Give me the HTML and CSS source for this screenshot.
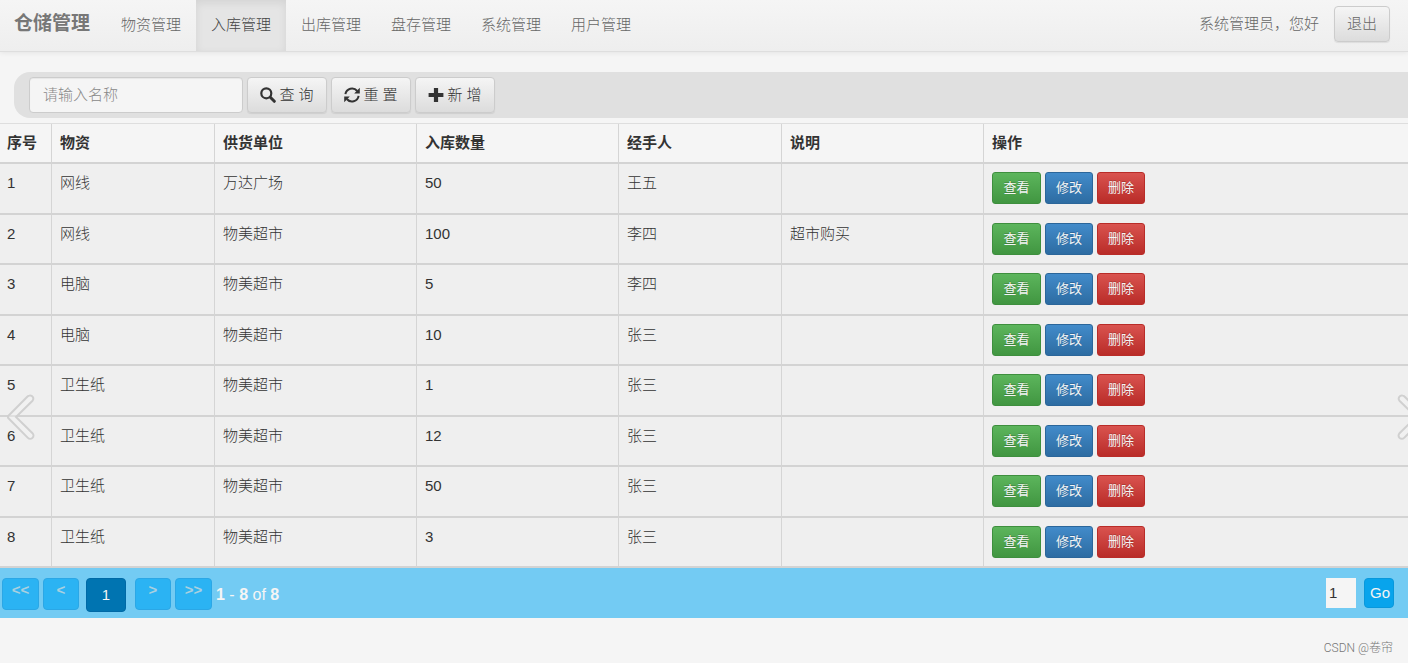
FILE: index.html
```html
<!DOCTYPE html>
<html lang="zh-CN">
<head>
<meta charset="utf-8">
<meta name="viewport" content="width=device-width, initial-scale=1">
<title>仓储管理</title>
<link rel="stylesheet" href="styles.css">
</head>
<body>
<header class="navbar">
  <a class="brand" href="#">仓储管理</a>
  <nav class="menu">
    <a class="menu-item" href="#">物资管理</a>
    <a class="menu-item active" href="#" aria-current="page">入库管理</a>
    <a class="menu-item" href="#">出库管理</a>
    <a class="menu-item" href="#">盘存管理</a>
    <a class="menu-item" href="#">系统管理</a>
    <a class="menu-item" href="#">用户管理</a>
  </nav>
  <span class="greeting">系统管理员，您好</span>
  <button class="btn" type="button">退出</button>
</header>

<main>
  <form class="search">
    <input class="search-input" type="text" placeholder="请输入名称" aria-label="请输入名称">
    <button class="btn btn-icon" type="button"><svg class="icon" viewBox="0 0 16 16" aria-hidden="true"><circle cx="6.300" cy="6.300" r="5" fill="none" stroke="currentColor" stroke-width="2.200"/><path d="M10.300 10.300l4 4" stroke="currentColor" stroke-width="3" stroke-linecap="round"/></svg>查 询</button>
    <button class="btn btn-icon" type="button"><svg class="icon" viewBox="0 0 16 16" aria-hidden="true"><path d="M1.400 7.200A6.700 6.700 0 0 1 13.200 4M14.600 8.800A6.700 6.700 0 0 1 2.800 12" fill="none" stroke="currentColor" stroke-width="2"/><path d="M15.800.800v5.600h-5.600zM.200 15.200V9.600h5.600z" fill="currentColor"/></svg>重 置</button>
    <button class="btn btn-icon" type="button"><svg class="icon" viewBox="0 0 16 16" aria-hidden="true"><path d="M5.900.900h4.200v5h5.300v4.200h-5.300v5H5.900v-5H.600V5.900h5.300z" fill="currentColor"/></svg>新 增</button>
  </form>

  <div class="grid">
    <table class="stock">
      <colgroup><col class="c-no"><col class="c-mid"><col class="c-wide"><col class="c-wide"><col class="c-mid"><col class="c-wide"><col></colgroup>
      <thead>
        <tr><th>序号</th><th>物资</th><th>供货单位</th><th>入库数量</th><th>经手人</th><th>说明</th><th>操作</th></tr>
      </thead>
      <tbody>
        <tr><td>1</td><td>网线</td><td>万达广场</td><td>50</td><td>王五</td><td></td><td><div class="actions"><button class="act view" type="button">查看</button><button class="act edit" type="button">修改</button><button class="act del" type="button">删除</button></div></td></tr>
        <tr><td>2</td><td>网线</td><td>物美超市</td><td>100</td><td>李四</td><td>超市购买</td><td><div class="actions"><button class="act view" type="button">查看</button><button class="act edit" type="button">修改</button><button class="act del" type="button">删除</button></div></td></tr>
        <tr><td>3</td><td>电脑</td><td>物美超市</td><td>5</td><td>李四</td><td></td><td><div class="actions"><button class="act view" type="button">查看</button><button class="act edit" type="button">修改</button><button class="act del" type="button">删除</button></div></td></tr>
        <tr><td>4</td><td>电脑</td><td>物美超市</td><td>10</td><td>张三</td><td></td><td><div class="actions"><button class="act view" type="button">查看</button><button class="act edit" type="button">修改</button><button class="act del" type="button">删除</button></div></td></tr>
        <tr><td>5</td><td>卫生纸</td><td>物美超市</td><td>1</td><td>张三</td><td></td><td><div class="actions"><button class="act view" type="button">查看</button><button class="act edit" type="button">修改</button><button class="act del" type="button">删除</button></div></td></tr>
        <tr><td>6</td><td>卫生纸</td><td>物美超市</td><td>12</td><td>张三</td><td></td><td><div class="actions"><button class="act view" type="button">查看</button><button class="act edit" type="button">修改</button><button class="act del" type="button">删除</button></div></td></tr>
        <tr><td>7</td><td>卫生纸</td><td>物美超市</td><td>50</td><td>张三</td><td></td><td><div class="actions"><button class="act view" type="button">查看</button><button class="act edit" type="button">修改</button><button class="act del" type="button">删除</button></div></td></tr>
        <tr><td>8</td><td>卫生纸</td><td>物美超市</td><td>3</td><td>张三</td><td></td><td><div class="actions"><button class="act view" type="button">查看</button><button class="act edit" type="button">修改</button><button class="act del" type="button">删除</button></div></td></tr>
      </tbody>
    </table>
    <button class="arrow arrow-prev" type="button" aria-label="上一张"><svg class="chevron" viewBox="0 0 28 46" aria-hidden="true"><path d="M22.500 1.500a3.200 3.200 0 0 1 3 5.200L9 23l16.500 16.300a3.200 3.200 0 0 1-4.600 4.600L1.500 24.300a2 2 0 0 1 0-2.600L20.500 2.500a3 3 0 0 1 2-1z"/></svg></button>
    <button class="arrow arrow-next" type="button" aria-label="下一张"><svg class="chevron" viewBox="0 0 28 46" aria-hidden="true"><path d="M5.500 1.500a3.200 3.200 0 0 0-3 5.200L19 23 2.500 39.300a3.200 3.200 0 0 0 4.600 4.600L26.500 24.300a2 2 0 0 0 0-2.600L7.500 2.500a3 3 0 0 0-2-1z"/></svg></button>
  </div>

  <div class="pager">
    <div class="pages">
      <button class="page page-wide" type="button">&lt;&lt;</button>
      <button class="page" type="button">&lt;</button>
      <button class="page current" type="button" aria-current="page">1</button>
      <button class="page" type="button">&gt;</button>
      <button class="page page-wide" type="button">&gt;&gt;</button>
      <span class="range"><b>1</b> - <b>8</b> of <b>8</b></span>
    </div>
    <form class="jump">
      <input class="jump-input" type="text" value="1" aria-label="页码">
      <button class="go" type="button">Go</button>
    </form>
  </div>
</main>

<footer class="credit">CSDN @卷帘</footer>
</body>
</html>
```
FILE: styles.css
```css
* {
  box-sizing: border-box;
}

body {
  margin: 0;
  overflow-x: hidden;
  background: #f5f5f5;
  color: #333;
  font: 300 15px/22px "Liberation Sans", "Noto Sans CJK SC", sans-serif;
}

button,
input {
  margin: 0;
  font: inherit;
  color: inherit;
}

b {
  font-weight: 700;
}

.navbar {
  display: flex;
  align-items: center;
  height: 52px;
  padding: 0 18px 3px 14px;
  border-bottom: 1px solid #dedede;
  background: linear-gradient(#f5f5f5, #eee);
  box-shadow: 0 1px 5px rgba(0, 0, 0, 0.07);
  color: #666;
}

.brand {
  margin-right: 16px;
  color: #777;
  font-size: 19px;
  font-weight: 700;
  line-height: 24px;
  text-decoration: none;
}

.menu {
  display: flex;
  flex: 1;
  margin-bottom: -3px;
}

.menu-item {
  height: 51px;
  padding: 14px 15px;
  color: #666;
  text-decoration: none;
}

.menu-item.active {
  background: #e5e5e5;
  box-shadow: inset 0 3px 9px rgba(0, 0, 0, 0.08);
  color: #444;
}

.greeting {
  margin-right: 15px;
}

.btn {
  height: 36px;
  padding: 0 12px;
  border: 1px solid #ccc;
  border-radius: 4px;
  background: linear-gradient(#f5f5f5, #dcdcdc);
  box-shadow: 0 1px 1px rgba(0, 0, 0, 0.08);
  white-space: nowrap;
}

.btn-icon {
  display: flex;
  align-items: center;
  justify-content: center;
  gap: 3px;
  width: 80px;
  padding: 0 0 1px;
}

.icon {
  width: 16px;
  height: 16px;
}

.search {
  display: flex;
  align-items: center;
  gap: 4px;
  height: 46px;
  margin: 20px 0 5px 14px;
  padding-left: 15px;
  border-radius: 16px 0 0 16px;
  background: #e0e0e0;
}

.search-input {
  width: 214px;
  height: 36px;
  padding: 0 13px 2px;
  border: 1px solid #ccc;
  border-radius: 4px;
  background: #f5f5f5;
  box-shadow: inset 0 1px 1px rgba(0, 0, 0, 0.06);
}

.search-input::placeholder {
  color: #888;
  opacity: 1;
}

.grid {
  position: relative;
}

.stock {
  width: 100%;
  table-layout: fixed;
  border-spacing: 0;
  border-top: 1px solid #dedede;
  background: #efefef;
}

.c-no {
  width: 3.7%;
}

.c-mid {
  width: 11.57%;
}

.c-wide {
  width: 14.35%;
}

.stock th,
.stock td {
  padding: 8px;
  border-right: 1px solid #d5d5d5;
  border-bottom: 2px solid #d3d3d3;
  text-align: left;
  vertical-align: top;
}

.stock th {
  height: 40px;
  background: #f5f5f5;
  font-weight: 700;
}

.stock td {
  height: 50px;
}

.stock tbody tr:nth-child(odd) td {
  height: 51px;
}

.stock th:first-child,
.stock td:first-child {
  padding-left: 7px;
}

.stock th:last-child,
.stock td:last-child {
  border-right: 0;
}

.actions {
  display: flex;
  gap: 4px;
}

.act {
  width: 48px;
  height: 32px;
  padding: 0;
  border: 1px solid;
  border-radius: 3px;
  color: #f5f5f5;
  font-size: 13px;
  font-weight: 400;
  line-height: 20px;
  text-shadow: 0 -1px 0 rgba(0, 0, 0, 0.2);
}

.view {
  width: 49px;
  border-color: #3e8f3e;
  background: linear-gradient(#5cb55c, #419641);
}

.edit {
  border-color: #2b669a;
  background: linear-gradient(#428bca, #2d6ca2);
}

.del {
  border-color: #b92c28;
  background: linear-gradient(#d9534f, #b92c28);
}

.arrow {
  position: absolute;
  top: 271px;
  width: 28px;
  height: 46px;
  padding: 0;
  border: 0;
  background: none;
}

.arrow-prev {
  left: 7px;
}

.arrow-next {
  right: -17px;
}

.chevron {
  display: block;
  width: 28px;
  height: 46px;
  fill: rgba(245, 245, 245, 0.4);
  stroke: #d0d0d0;
  stroke-width: 2;
}

.pager {
  display: flex;
  align-items: center;
  justify-content: space-between;
  height: 50px;
  padding: 0 14px 0 2px;
  background: #73cbf3;
  color: #f5f5f5;
  font-size: 16px;
}

.pages {
  display: flex;
  align-items: flex-start;
  gap: 4px;
  padding-top: 4px;
}

.page {
  width: 36px;
  height: 32px;
  padding: 0 0 8px;
  border: 1px solid #2ba7e6;
  border-radius: 4px;
  background: #2bb3f3;
  color: #a9d0e0;
  font-size: 15px;
  font-weight: 700;
}

.page-wide {
  width: 37px;
}

.current {
  width: 40px;
  height: 34px;
  margin: 0 5px 0 3px;
  padding: 0;
  border-color: #0069a6;
  background: #0074b1;
  color: #f5f5f5;
  font-weight: 400;
}

.range {
  padding-top: 6px;
}

.jump {
  display: flex;
  align-items: center;
  gap: 8px;
}

.jump-input {
  width: 30px;
  height: 30px;
  padding: 0 3px 2px;
  border: 0;
  background: #f5f5f5;
  color: #333;
  font-size: 15px;
}

.go {
  width: 30px;
  height: 30px;
  padding: 0 0 0 2px;
  border: 1px solid #0898dc;
  border-radius: 4px;
  background: #08a4ec;
  font-size: 15px;
}

.credit {
  padding: 20px 15px 0;
  color: #777;
  font-family: Roboto, "Noto Sans CJK SC", sans-serif;
  font-size: 12px;
  line-height: 20px;
  text-align: right;
}
```
